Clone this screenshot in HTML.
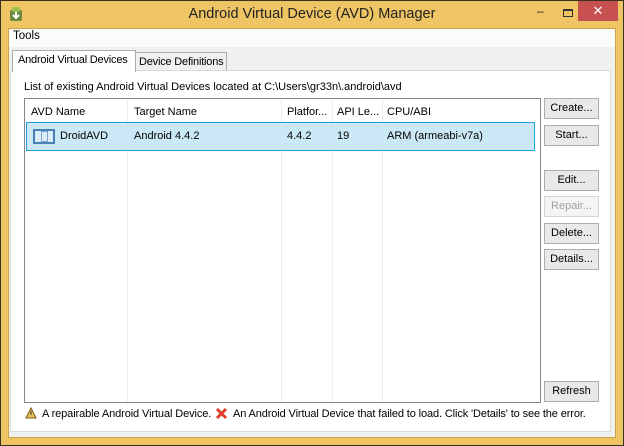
<!DOCTYPE html>
<html><head><style>
*{margin:0;padding:0;box-sizing:border-box}
body{width:624px;height:446px;background:#f0c86a;font-family:"Liberation Sans",sans-serif;font-size:11px;color:#000;position:relative;overflow:hidden}
.a{position:absolute;white-space:nowrap}
.frame{left:0;top:0;width:624px;height:446px;border:1px solid #3a3020;background:#efc465}
.client{left:8px;top:28px;width:608px;height:410px;background:#f0f0f0;border:1px solid #c9a24a}
.btn{position:absolute;left:544px;width:55px;height:21px;background:#e9e9e9;border:1px solid #adadad;text-align:center;line-height:19px;font-size:11px}
.col{position:absolute;top:0;bottom:0;border-left:1px solid #ececec}
.hd{position:absolute;top:7px}
</style></head><body>
<div class="a frame"></div>
<div class="a" style="left:8px;top:6px;width:16px;height:16px"><svg width="16" height="16"><rect x="2" y="4" width="12" height="11" rx="2" fill="#6a8a40"/><rect x="4" y="1" width="8" height="5" rx="2" fill="#9cc050"/><path d="M8 6v6M5 9l3 3 3-3" stroke="#fff" stroke-width="2" fill="none"/></svg></div>
<div class="a" style="left:0;top:6px;width:624px;text-align:center;font-size:14.5px;color:#222">Android Virtual Device (AVD) Manager</div>
<div class="a" style="left:537px;top:4px;font-size:12px;color:#222">–</div>
<div class="a" style="left:563px;top:9px;width:10px;height:8px;border:1px solid #333;border-top-width:2px"></div>
<div class="a" style="left:578px;top:1px;width:40px;height:20px;background:#c75050;color:#fff;text-align:center;font-size:13px;line-height:19px">✕</div>
<div class="a client"></div>
<div class="a" style="left:9px;top:29px;width:606px;height:18px;background:#fbfbfb"></div>
<div class="a" style="left:13px;top:30px;font-size:11.5px">Tools</div>
<div class="a" style="left:135px;top:52px;width:92px;height:19px;background:#f0f0f0;border:1px solid #acacac;padding:3px 3px;font-size:11px;letter-spacing:-0.2px">Device Definitions</div>
<div class="a" style="left:10px;top:70px;width:601px;height:362px;background:#fff;border:1px solid #d9d9d9"></div>
<div class="a" style="left:12px;top:50px;width:124px;height:22px;background:#fff;border:1px solid #acacac;border-bottom:none;padding:3px 5px;font-size:11px;letter-spacing:-0.2px">Android Virtual Devices</div>
<div class="a" style="left:24px;top:81px;font-size:11px">List of existing Android Virtual Devices located at C:\Users\gr33n\.android\avd</div>
<div class="a" style="left:24px;top:98px;width:517px;height:305px;border:1px solid #828790;background:#fff">
 <div class="col" style="left:102px"></div><div class="col" style="left:256px"></div><div class="col" style="left:307px"></div><div class="col" style="left:357px"></div>
 <div class="hd" style="left:6px">AVD Name</div><div class="hd" style="left:109px">Target Name</div><div class="hd" style="left:262px">Platfor...</div><div class="hd" style="left:312px">API Le...</div><div class="hd" style="left:362px">CPU/ABI</div>
 <div class="a" style="left:1px;top:23px;width:509px;height:29px;background:#cbe8f6;border:1px solid #26a0da">
  <div class="a" style="left:6px;top:6px;width:22px;height:15px;border:2px solid #4a7fb8;background:#dcecf8"><div class="a" style="left:6px;top:0;width:7px;height:11px;border:1px solid #7aa4cc"></div></div>
  <div class="a" style="left:33px;top:7px">DroidAVD</div><div class="a" style="left:107px;top:7px">Android 4.4.2</div><div class="a" style="left:260px;top:7px">4.4.2</div><div class="a" style="left:310px;top:7px">19</div><div class="a" style="left:360px;top:7px">ARM (armeabi-v7a)</div>
 </div>
</div>
<div class="btn" style="top:98px">Create...</div>
<div class="btn" style="top:125px">Start...</div>
<div class="btn" style="top:170px">Edit...</div>
<div class="btn" style="top:196px;color:#a0a0a0;background:#f4f4f4;border-color:#d5d5d5">Repair...</div>
<div class="btn" style="top:223px">Delete...</div>
<div class="btn" style="top:249px">Details...</div>
<div class="btn" style="top:381px">Refresh</div>
<div class="a" style="left:25px;top:407px"><svg width="12" height="12"><path d="M6 1L11 11H1Z" fill="#e8c060" stroke="#7a5a10"/><path d="M6 4v4" stroke="#333"/></svg></div>
<div class="a" style="left:42px;top:408px;letter-spacing:-0.1px">A repairable Android Virtual Device.</div>
<div class="a" style="left:215px;top:407px"><svg width="13" height="13"><path d="M2 2L11 11M11 2L2 11" stroke="#e03c2c" stroke-width="3"/></svg></div>
<div class="a" style="left:233px;top:408px;letter-spacing:-0.12px">An Android Virtual Device that failed to load. Click 'Details' to see the error.</div>
</body></html>
